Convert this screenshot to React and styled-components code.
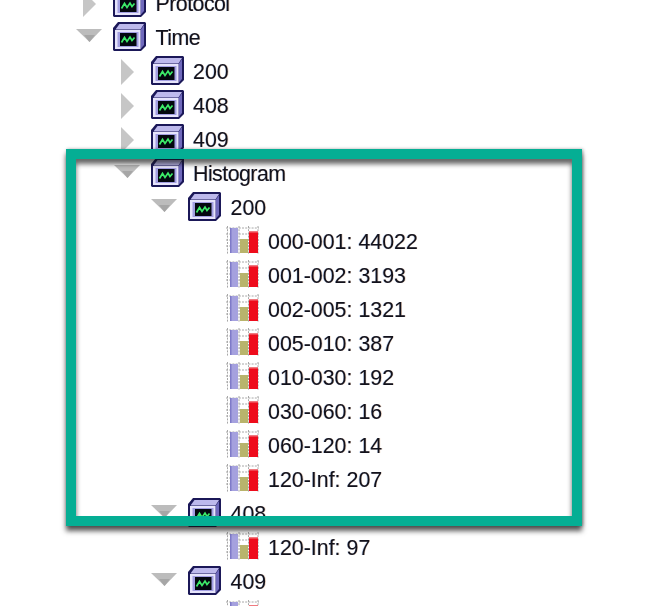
import React from "react";
import styled, { createGlobalStyle } from "styled-components";

const Global = createGlobalStyle`
  html, body { margin: 0; padding: 0; background: #fff; overflow: hidden; }
`;

const Page = styled.div`
  position: relative;
  width: 648px;
  height: 606px;
  overflow: hidden;
  background: #fff;
`;

const Tree = styled.ul`
  list-style: none;
  margin: -13px 0 0;
  padding: 0;
  filter: blur(0.5px);
  font-family: "Liberation Sans", Arial, sans-serif;
  font-size: 21.4px;
  color: #12121c;
`;

const Row = styled.li`
  display: flex;
  align-items: center;
  height: 34px;
  padding-left: ${(p) => 76 + p.$level * 37.5}px;
`;

const ToggleSlot = styled.span`
  display: flex;
  align-items: center;
  flex: 0 0 37px;
  height: 100%;
`;

const Label = styled.span`
  margin-left: 9.5px;
  white-space: nowrap;
  line-height: 34px;
  height: 34px;
  letter-spacing: ${(p) => (p.$word ? "-0.55px" : "0")};
  text-shadow: 0.6px 0 rgba(190, 110, 50, 0.3), -0.6px 0 rgba(50, 110, 200, 0.3);
`;

const Highlight = styled.div`
  position: absolute;
  left: 66px;
  top: 149px;
  width: 516px;
  height: 377px;
  box-sizing: border-box;
  border: 10px solid #05ae94;
  box-shadow: 0 5px 5px rgba(20, 20, 20, 0.7), 1px 0 3px rgba(20, 20, 20, 0.35),
    inset 0 5px 5px rgba(20, 20, 20, 0.65);
  pointer-events: none;
`;

const OpenArrowSvg = styled.svg`
  display: block;
  width: 27px;
  height: 15px;
  margin-top: -5px;
`;

const ClosedArrowSvg = styled.svg`
  display: block;
  width: 15px;
  height: 26px;
  margin-left: 6px;
`;

const MonitorSvg = styled.svg`
  display: block;
  flex: none;
  width: 33px;
  height: 29px;
  margin-top: -3px;
`;

const BarSvg = styled.svg`
  display: block;
  flex: none;
  width: 33px;
  height: 30px;
  margin-top: -4px;
`;

const Arrow = ({ open }) =>
  open ? (
    <OpenArrowSvg viewBox="0 0 27 15">
      <path d="M0 1H26L13.5 14Z" fill="#bcbcbc" />
      <path d="M8 7H19L13.5 14Z" fill="#a6a6a6" />
    </OpenArrowSvg>
  ) : (
    <ClosedArrowSvg viewBox="0 0 15 26">
      <path d="M1 0L14 13L1 26Z" fill="#c6c6c6" />
    </ClosedArrowSvg>
  );

const Monitor = () => (
  <MonitorSvg viewBox="0 0 33 29">
    <path d="M0 6L5 0H32L33 1V24L28 29H1L0 28Z" fill="#1b1858" />
    <path d="M2.5 7.5L6.5 2H31L27.5 7.5Z" fill="#bdb9ec" />
    <path d="M27.5 8L31 3V23L27.5 27Z" fill="#6f69bc" />
    <rect x="2" y="8" width="25.5" height="19" fill="#e6e4fb" />
    <rect x="4.5" y="10" width="21" height="15" fill="#a29ee2" />
    <rect x="7" y="11" width="16.5" height="13" fill="#04080f" />
    <path
      d="M8.5 20.5L11.5 15.5L14 19.5L17 15L19 18.5L21.5 15.5"
      fill="none"
      stroke="#3cea68"
      strokeWidth="1.7"
    />
  </MonitorSvg>
);

const BarChart = () => (
  <BarSvg viewBox="0 0 33 30">
    <path
      d="M1.5 1V29M13 1V29M22.5 1V29M32 1V29M0 3H33M0 9H33M0 15H33M0 21H33"
      fill="none"
      stroke="#a8a8a8"
      strokeWidth="1"
      strokeDasharray="2 1.2"
    />
    <rect x="4" y="3" width="8" height="25" fill="#a5a1de" />
    <rect x="4" y="3" width="1.5" height="25" fill="#7e7ac8" />
    <rect x="14" y="14" width="8" height="14" fill="#b8b46c" />
    <rect x="23" y="6" width="9" height="22" fill="#ee0c1c" />
    <rect x="23" y="6" width="9" height="1.5" fill="#f07a80" />
  </BarSvg>
);

const rows = [
  { level: 0, text: "Protocol", arrow: "closed" },
  { level: 0, text: "Time", arrow: "open" },
  { level: 1, text: "200", arrow: "closed" },
  { level: 1, text: "408", arrow: "closed" },
  { level: 1, text: "409", arrow: "closed" },
  { level: 1, text: "Histogram", arrow: "open" },
  { level: 2, text: "200", arrow: "open" },
  { level: 3, text: "000-001: 44022" },
  { level: 3, text: "001-002: 3193" },
  { level: 3, text: "002-005: 1321" },
  { level: 3, text: "005-010: 387" },
  { level: 3, text: "010-030: 192" },
  { level: 3, text: "030-060: 16" },
  { level: 3, text: "060-120: 14" },
  { level: 3, text: "120-Inf: 207" },
  { level: 2, text: "408", arrow: "open" },
  { level: 3, text: "120-Inf: 97" },
  { level: 2, text: "409", arrow: "open" },
  { level: 3, text: "000-001" },
];

export default function App() {
  return (
    <Page>
      <Global />
      <Tree>
        {rows.map((r, i) => (
          <Row key={i} $level={r.level}>
            <ToggleSlot>{r.arrow && <Arrow open={r.arrow === "open"} />}</ToggleSlot>
            {r.arrow ? <Monitor /> : <BarChart />}
            <Label $word={/^[A-Z]/.test(r.text)}>{r.text}</Label>
          </Row>
        ))}
      </Tree>
      <Highlight />
    </Page>
  );
}
